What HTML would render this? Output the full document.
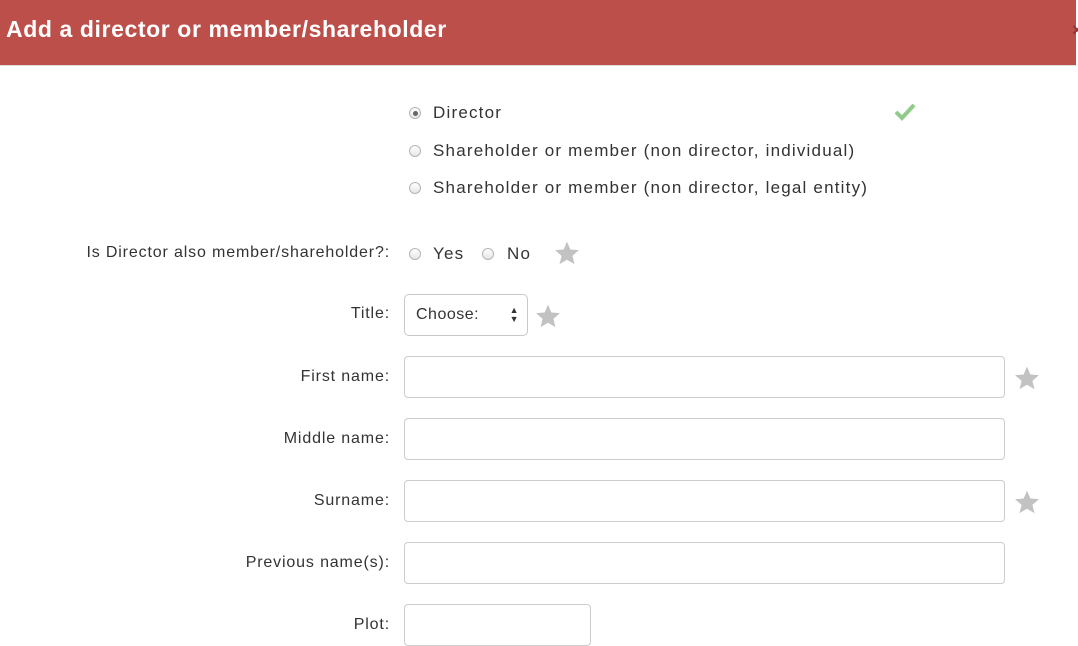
<!DOCTYPE html>
<html><head><style>
body{margin:0;width:1078px;height:636px;overflow:hidden;background:#fff;font-family:"Liberation Sans",Arial,sans-serif;position:relative;color:#333}
.hdr{position:absolute;left:0;top:0;width:1076px;height:65px;background:#bd4f4a;border-bottom:1px solid #ddd}
.hdr h1{margin:0;position:absolute;left:6px;top:16px;font-size:23px;font-weight:bold;color:#fff;letter-spacing:0.6px}
.x{position:absolute;left:1072px;top:20px;color:#8a3a36;font-size:18px;font-weight:bold}
.t{position:absolute;font-size:17px;color:#333;white-space:nowrap;letter-spacing:1.2px}
.lbl{position:absolute;font-size:16px;color:#333;text-align:right;right:688px;white-space:nowrap;letter-spacing:0.85px}
.r{position:absolute;width:10px;height:10px;border-radius:50%;border:1px solid #b5b5b5;background:linear-gradient(#fff,#e6e6e6)}
.r.on::after{content:"";position:absolute;left:2.5px;top:2.5px;width:5px;height:5px;border-radius:50%;background:#666}
.in{position:absolute;left:404px;width:601px;height:42px;border:1px solid #ccc;border-radius:4px;box-sizing:border-box;background:#fff}
.star{position:absolute;width:26px;height:26px}
</style></head><body>
<div class="hdr"><h1>Add a director or member/shareholder</h1><div class="x">×</div></div>

<div class="r on" style="left:409px;top:107px"></div><div class="t" style="left:433px;top:103px">Director</div>
<svg style="position:absolute;left:893px;top:101px" width="24" height="22"><path d="M3 11 L9 17 L21 4" stroke="#8fcc8a" stroke-width="4" fill="none"/></svg>
<div class="r" style="left:409px;top:145px"></div><div class="t" style="left:433px;top:141px">Shareholder or member (non director, individual)</div>
<div class="r" style="left:409px;top:182px"></div><div class="t" style="left:433px;top:178px">Shareholder or member (non director, legal entity)</div>

<div class="lbl" style="top:244px">Is Director also member/shareholder?:</div>
<div class="r" style="left:409px;top:248px"></div><div class="t" style="left:433px;top:244px">Yes</div>
<div class="r" style="left:482px;top:248px"></div><div class="t" style="left:507px;top:244px">No</div>
<svg class="star" style="left:554px;top:240px" viewBox="0 0 24 24"><path d="M12 1.5l3.1 7.3 7.9.6-6 5.2 1.9 7.7L12 18.2 5.1 22.3 7 14.6 1 9.4l7.9-.6z" fill="#c2c2c2"/></svg>

<div class="lbl" style="top:305px">Title:</div>
<div style="position:absolute;left:404px;top:294px;width:124px;height:42px;border:1px solid #c8c8c8;border-radius:5px;box-sizing:border-box;font-size:16px;padding:11px 0 0 11px;color:#333;letter-spacing:0.5px">Choose:<span style="position:absolute;right:8px;top:11px;font-size:9px;line-height:9px">▲<br>▼</span></div>
<svg class="star" style="left:535px;top:303px" viewBox="0 0 24 24"><path d="M12 1.5l3.1 7.3 7.9.6-6 5.2 1.9 7.7L12 18.2 5.1 22.3 7 14.6 1 9.4l7.9-.6z" fill="#c2c2c2"/></svg>

<div class="lbl" style="top:368px">First name:</div>
<div class="in" style="top:356px"></div>
<svg class="star" style="left:1014px;top:365px" viewBox="0 0 24 24"><path d="M12 1.5l3.1 7.3 7.9.6-6 5.2 1.9 7.7L12 18.2 5.1 22.3 7 14.6 1 9.4l7.9-.6z" fill="#c2c2c2"/></svg>

<div class="lbl" style="top:430px">Middle name:</div>
<div class="in" style="top:418px"></div>

<div class="lbl" style="top:492px">Surname:</div>
<div class="in" style="top:480px"></div>
<svg class="star" style="left:1014px;top:489px" viewBox="0 0 24 24"><path d="M12 1.5l3.1 7.3 7.9.6-6 5.2 1.9 7.7L12 18.2 5.1 22.3 7 14.6 1 9.4l7.9-.6z" fill="#c2c2c2"/></svg>

<div class="lbl" style="top:554px">Previous name(s):</div>
<div class="in" style="top:542px"></div>

<div class="lbl" style="top:616px">Plot:</div>
<div class="in" style="top:604px;width:187px"></div>
</body></html>
